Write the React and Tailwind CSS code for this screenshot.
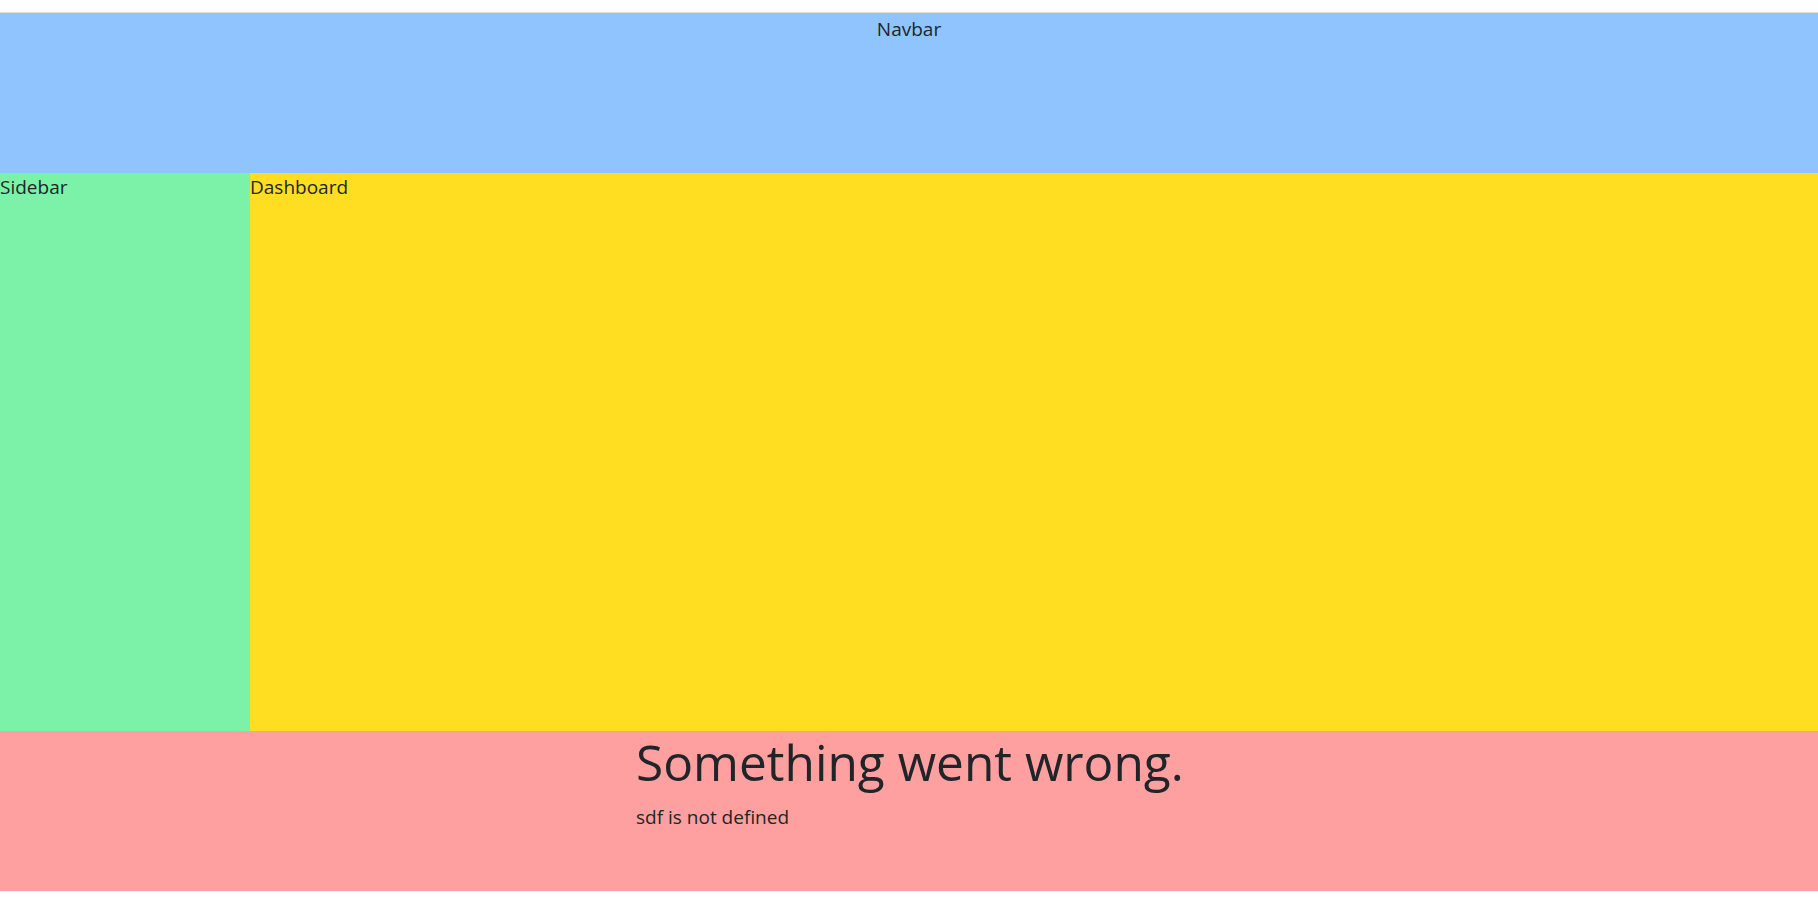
import React from 'react';

export default function App() {
  return (
    <div className="min-h-screen bg-white pt-[12px] text-[#212529]" style={{ fontFamily: '"Open Sans", "Noto Sans", sans-serif' }}>
      {/* Navbar */}
      <div className="h-[161px] border-t border-[#dedede] bg-[#90c4fe] pt-[3px] text-center text-[19px] leading-[27px]">
        Navbar
      </div>

      {/* Sidebar + Dashboard */}
      <div className="flex h-[558px] text-[19px] leading-[27px]">
        <div className="w-[250px] bg-[#7cf2a8] pt-[1px]">Sidebar</div>
        <div className="flex-1 bg-[#ffde21] pt-[1px]">Dashboard</div>
      </div>

      {/* Error boundary */}
      <div className="h-[160px] bg-[#fea0a0] pl-[636px] pt-[2px]">
        <h1 className="whitespace-nowrap text-[49.6px] leading-[1.2] font-normal">Something went wrong.</h1>
        <p className="mt-[11px] text-[19px] leading-[27px]">sdf is not defined</p>
      </div>
    </div>
  );
}
